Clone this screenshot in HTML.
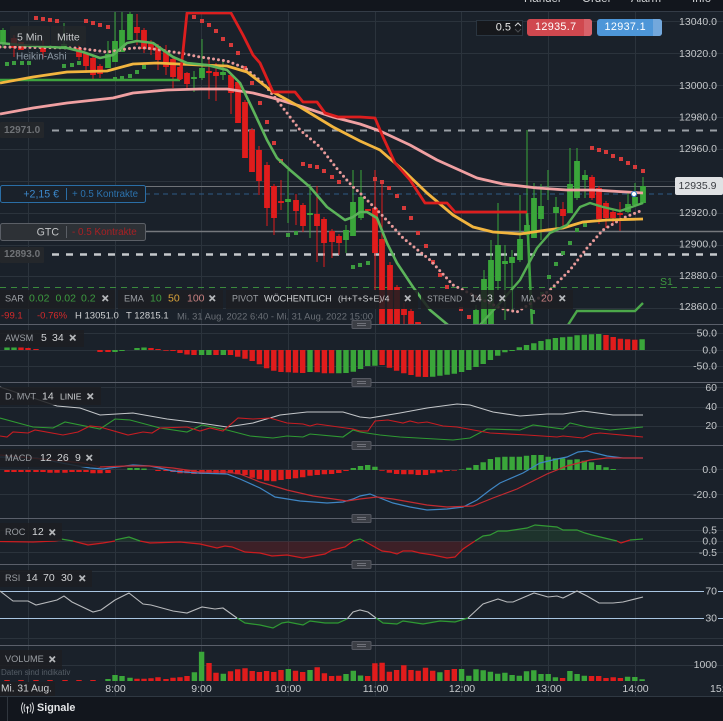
<!DOCTYPE html>
<html lang="de"><head><meta charset="utf-8"><title>Chart</title>
<style>
html,body{margin:0;padding:0;background:#1a212a;width:723px;height:721px;overflow:hidden}
svg{display:block;position:absolute;left:0;top:0;filter:blur(.3px)}
text{font-family:"Liberation Sans",sans-serif;font-size:10.5px;fill:#c8cbce;dominant-baseline:central}
.ax{text-anchor:end;fill:#c4c7ca}
.t{text-anchor:middle;fill:#c8cbce}
.l{fill:#9a9ea3;font-size:9.2px}.w{fill:#d2d4d6}
.x{stroke:#b4b6b9;stroke-width:1.7;fill:none}
.tag{fill:#1d1e22;fill-opacity:.86}
</style></head><body>
<svg width="723" height="721" viewBox="0 0 723 721" xmlns="http://www.w3.org/2000/svg">
<defs><clipPath id="mc"><rect x="0" y="12" width="723" height="312"/></clipPath></defs>
<rect width="723" height="721" fill="#1a212a"/>
<!-- grid -->
<path fill="none" stroke="#2b333c" stroke-width="1" d="M28.5 11V696M115.5 11V696M201.5 11V696M288.5 11V696M375.5 11V696M461.5 11V696M548.5 11V696M635.5 11V696M0 21.5H723M0 53.5H723M0 85.5H723M0 117.5H723M0 149.5H723M0 181.5H723M0 213.5H723M0 245.5H723M0 276.5H723M0 308.5H723M0 333.5H723M0 350.5H723M0 366.5H723M0 387.5H723M0 407.5H723M0 426.5H723M0 469.5H723M0 494.5H723M0 530.5H723M0 541.5H723M0 552.5H723M0 571.5H723M0 638.5H723M0 665.5H723"/>
<!-- top bar -->
<rect width="723" height="11" fill="#12161d"/><rect y="11" width="723" height="1" fill="#343c47"/>
<g style="font-size:11.5px"><text x="524" y="-1" style="font-size:11.5px;fill:#d0d2d4">Handel</text><text x="582" y="-1" style="font-size:11.5px;fill:#d0d2d4">Order</text><text x="631" y="-1" style="font-size:11.5px;fill:#d0d2d4">Alarm</text><text x="692" y="-1" style="font-size:11.5px;fill:#d0d2d4">Info</text></g>
<!-- level lines -->
<path stroke="#9a9fa5" stroke-width="2" stroke-dasharray="7 7" fill="none" d="M52 130.5H723"/>
<path stroke="#c6c9cc" stroke-width="2.4" stroke-dasharray="7 7" fill="none" d="M52 254.5H723"/>
<path stroke="#6f7378" stroke-width="1" fill="none" d="M145 186.5H723"/>
<path stroke="#75787d" stroke-width="1.4" fill="none" d="M145 231.5H723"/>
<path stroke="#2d5a86" stroke-width="1" stroke-dasharray="5 4" fill="none" d="M145 194H723"/>
<path stroke="#3b8a3c" stroke-width="1" stroke-dasharray="6 5" fill="none" d="M0 287.5H723"/>
<text x="660" y="282" style="fill:#3f9a40;font-size:10.5px">S1</text>
<g clip-path="url(#mc)">
<!-- wicks -->
<path fill="none" stroke="#e01c1c" stroke-width="1" d="M14 35V57M43 40V58M79 45V60M86 52V73M93 56V79M100 64V78M137 14V45M144 28V53M151 40V55M158 44V70M166 45V75M173 57V88M180 65V80M187 72V89M209 60V99M216 63V101M231 75V114M238 81V123M245 100V157M252 128V172M259 146V195M267 162V226M274 184V235M281 180V210M296 194V225M303 203V232M317 186V262M324 217V267M332 229V258M339 234V255M375 170V290M382 180V324M390 262V324M397 285V324M404 303V324M411 309V324M599 186V224M606 201V228M613 210V224M620 202V231M592 175V200M563 202V228"/>
<path fill="none" stroke="#3aa63a" stroke-width="1" d="M3 28V48M64 23V47M108 41V68M115 12V62M122 12V52M130 12V40M194 71V92M202 39V80M223 60V80M288 170V223M310 184V238M346 225V253M353 170V236M361 170V220M476 305V324M484 270V324M491 240V324M498 203V290M505 245V320M512 250V310M520 195V262M527 130V236M534 183V238M541 184V240M548 170V200M556 197V228M570 148V213M577 148V200M585 170V198M628 193V213M635 183V206M643 177V204"/>
<!-- bodies -->
<path fill="none" stroke="#e01c1c" stroke-width="5.8" d="M14 38V48M21 42V50M43 46V52M79 48V57M86 53V66M93 58V75M100 66V74M137 27V33M144 30V49M151 42V50M158 46V60M166 52V67M173 59V77M180 67V79M187 73V84M209 71V73M216 72V76M231 75V93M238 82V123M245 102V158M252 130V172M259 150V181M267 165V208M274 186V218M281 201V203M296 200V211M303 205V226M317 214V226M324 219V243M332 231V242M339 236V243M368 209V211M375 208V253M382 239V324M390 265V324M397 287V324M404 309V315M411 311V324M418 322V324M592 177V198M599 188V219M606 203V218M613 212V218M620 213V215M563 209V216"/>
<path fill="none" stroke="#3aa63a" stroke-width="5.8" d="M3 30V43M64 44V47M108 54V68M115 41V62M122 30V52M130 14V40M194 77V79M202 68V78M223 72V75M288 199V202M310 213V215M346 230V240M353 202V236M361 197V218M476 310V324M484 279V324M491 260V324M498 245V281M505 261V264M512 257V263M520 239V260M527 225V235M534 198V238M541 206V219M556 207V213M570 184V213M577 161V198M585 175V180M628 204V212M635 197V205M643 186V203"/>
<!-- SAR red -->
<g fill="#d63a3a"><rect x="34" y="16" width="4" height="4"/><rect x="41" y="17" width="4" height="4"/><rect x="48" y="18" width="4" height="4"/><rect x="55" y="19" width="4" height="4"/><rect x="84" y="19" width="4" height="4"/><rect x="91" y="21" width="4" height="4"/><rect x="98" y="23" width="4" height="4"/><rect x="106" y="25" width="4" height="4"/><rect x="192" y="15" width="4" height="4"/><rect x="200" y="19" width="4" height="4"/><rect x="207" y="23" width="4" height="4"/><rect x="214" y="29" width="4" height="4"/><rect x="221" y="37" width="4" height="4"/><rect x="229" y="43" width="4" height="4"/><rect x="236" y="51" width="4" height="4"/><rect x="243" y="66" width="4" height="4"/><rect x="250" y="81" width="4" height="4"/><rect x="258" y="101" width="4" height="4"/><rect x="265" y="120" width="4" height="4"/><rect x="272" y="141" width="4" height="4"/><rect x="279" y="159" width="4" height="4"/><rect x="301" y="162" width="4" height="4"/><rect x="308" y="164" width="4" height="4"/><rect x="315" y="165" width="4" height="4"/><rect x="322" y="169" width="4" height="4"/><rect x="330" y="175" width="4" height="4"/><rect x="337" y="180" width="4" height="4"/><rect x="373" y="177" width="4" height="4"/><rect x="380" y="180" width="4" height="4"/><rect x="387" y="186" width="4" height="4"/><rect x="395" y="194" width="4" height="4"/><rect x="402" y="206" width="4" height="4"/><rect x="409" y="216" width="4" height="4"/><rect x="416" y="231" width="4" height="4"/><rect x="424" y="244" width="4" height="4"/><rect x="431" y="260" width="4" height="4"/><rect x="438" y="273" width="4" height="4"/><rect x="445" y="285" width="4" height="4"/><rect x="459" y="307" width="4" height="4"/><rect x="467" y="315" width="4" height="4"/><rect x="590" y="146" width="4" height="4"/><rect x="597" y="148" width="4" height="4"/><rect x="604" y="150" width="4" height="4"/><rect x="611" y="154" width="4" height="4"/><rect x="619" y="157" width="4" height="4"/><rect x="626" y="161" width="4" height="4"/><rect x="633" y="165" width="4" height="4"/><rect x="641" y="169" width="4" height="4"/></g>
<!-- SAR green -->
<g fill="#3c9c3f"><rect x="5" y="62" width="4" height="4"/><rect x="12" y="61" width="4" height="4"/><rect x="20" y="61" width="4" height="4"/><rect x="27" y="61" width="4" height="4"/><rect x="62" y="64" width="4" height="4"/><rect x="70" y="63" width="4" height="4"/><rect x="77" y="61" width="4" height="4"/><rect x="113" y="77" width="4" height="4"/><rect x="120" y="76" width="4" height="4"/><rect x="128" y="74" width="4" height="4"/><rect x="135" y="70" width="4" height="4"/><rect x="142" y="65" width="4" height="4"/><rect x="286" y="233" width="4" height="4"/><rect x="294" y="231" width="4" height="4"/><rect x="351" y="265" width="4" height="4"/><rect x="358" y="263" width="4" height="4"/><rect x="366" y="261" width="4" height="4"/><rect x="531" y="310" width="4" height="4"/><rect x="540" y="292" width="4" height="4"/><rect x="547" y="275" width="4" height="4"/><rect x="554" y="262" width="4" height="4"/><rect x="561" y="251" width="4" height="4"/><rect x="568" y="241" width="4" height="4"/><rect x="575" y="228" width="4" height="4"/><rect x="583" y="223" width="4" height="4"/></g>
<!-- green trend -->
<path fill="none" stroke="#3fa33f" stroke-width="2.6" d="M0 80H180M527 213L532 325"/>
<path fill="none" stroke="#4ca84a" stroke-width="2.4" d="M568 325L577 311H635L643 303"/>
<!-- pink dotted -->
<path fill="none" stroke="#e89a9a" stroke-width="3" stroke-linecap="round" stroke-dasharray="0 5" d="M0 47L77 48L107 52L133 48L147 48L180 53L200 57L227 61L245 68L263 83L277 100L300 130L320 147L338 170L353 187L360 193L380 213L403 238L430 260L453 285L477 297L500 308L517 312L533 302L550 290L570 270L587 248L603 230L623 218L643 210"/>
<!-- pink ma -->
<path fill="none" stroke="#f0a0a2" stroke-width="2.8" stroke-linejoin="round" d="M0 114L33 108L67 103L113 98L133 93L167 90L200 89L227 89L253 93L273 98L300 106L333 117L360 124L380 131L410 145L437 160L457 169L477 178L503 184L537 188L567 190L593 190L643 193"/>
<!-- yellow -->
<path fill="none" stroke="#f2b53f" stroke-width="2.8" stroke-linejoin="round" d="M0 83L33 77L67 72L107 71L133 64L157 63L200 65L227 66L247 72L273 92L300 107L333 127L360 141L380 150L403 170L427 193L453 215L473 227L493 232L520 234L547 230L563 228L583 222L607 220L643 219"/>
<!-- supertrend red -->
<path fill="none" stroke="#dc1e1e" stroke-width="2.8" stroke-linejoin="round" d="M180 80L187 13H231L243 35L253 55L260 63L273 92H295L303 102H317L325 113L338 117H360L375 118L383 137L395 163L403 172L410 180L425 203H447L455 212H527"/>
<!-- green sma -->
<path fill="none" stroke="#5cb35a" stroke-width="2.6" stroke-linejoin="round" d="M0 43L20 45L67 48L83 52L100 58L113 55L127 43L137 41L153 43L173 57L187 63L207 65L227 70L240 83L253 110L267 140L277 158L290 170L310 187L327 207L345 220L353 217L360 212L367 212L377 218L387 243L397 263L413 287L430 310L448 325"/>
<path fill="none" stroke="#55ad53" stroke-width="2.4" stroke-linejoin="round" d="M480 325L500 303L520 280L537 248L550 233L567 225L580 207L590 203L603 207L620 211L643 203"/>
<circle cx="634" cy="194" r="2.6" fill="#fff" stroke="#3b7fc0" stroke-width="1"/>
</g>
<!-- separators -->
<path fill="none" stroke="#5a5f6a" stroke-width="1" d="M0 324.5H723M0 382.5H723M0 445.5H723M0 518.5H723M0 564.5H723M0 645.5H723"/>
<!-- AWSM -->
<path fill="none" stroke="#e01c1c" stroke-width="5.4" d="M21 347.5V350M28 348V350M36 349V350M100 350V352M108 350V352M151 348V350M158 349V350M166 350V350.8M173 350V351M180 350V353M187 350V354.5M194 350V355M216 350V355M230.5 350V355M237.7 350V356.7M245 350V358.7M252.2 350V361M259.4 350V364.3M266.6 350V368.3M273.8 350V370.7M281 350V372M288.3 350V372.3M295.5 350V372.7M302.7 350V373M317.2 350V372.3M324.4 350V373.3M331.6 350V373.3M382.1 350V365M389.4 350V367.7M396.6 350V370.7M403.8 350V373.3M411 350V375M418.2 350V376.7M425.5 350V377M606 350V335M613.2 350V337M620.4 350V338.7M627.6 350V339.3M634.8 350V339.7"/>
<path fill="none" stroke="#3aa63a" stroke-width="5.4" d="M7 347.5V350M14 347.5V350M115 350V352M122 350V351M137 348V350M144 347.5V350M201.6 350V355M208.9 350V355M223.3 350V355M310 350V372M338.8 350V373.3M346 350V373M353.3 350V371.7M360.5 350V369M367.7 350V366M374.9 350V365.7M432.7 350V376.7M439.9 350V375.7M447.1 350V374.7M454.3 350V373.7M461.6 350V372M468.8 350V370M476 350V367M483.2 350V364M490.4 350V360M497.7 350V355.7M504.9 350V352.3M512.1 350V351M519.3 350V347.3M526.5 350V345M533.8 350V343.3M541 350V341M548.2 350V339.3M555.4 350V338M562.6 350V337.3M569.9 350V336.7M577.1 350V335.3M584.3 350V334.7M591.5 350V334.3M598.7 350V334M642.1 350V339.3"/>
<!-- DMVT -->
<path fill="none" stroke="#c4c7ca" stroke-width="1.1" d="M0 387L57 406L80 408L100 415L133 413L167 419L200 423L227 427L253 423L280 415L307 412L343 412L360 417L370 418L400 413L427 408L457 404L470 405L493 412L520 416L547 414L563 414L583 411L613 415L643 415"/>
<path fill="none" stroke="#2f9a33" stroke-width="1.1" d="M0 418L33 427L53 428L65 422L100 429L115 419L130 420L160 428L187 432L202 425L227 430L250 436L273 438L287 436L303 437L310 434L343 437L353 430L360 432L380 435L400 437L453 440L470 438L487 429L520 430L533 425L563 429L570 423L587 427L610 430L643 427"/>
<path fill="none" stroke="#c81d22" stroke-width="1.1" d="M0 436L7 437L13 432L28 433L35 430L63 435L78 432L90 426L100 427L128 435L143 432L152 433L160 428L187 427L200 431L210 428L223 431L238 418L253 419L270 418L287 423L303 424L310 426L317 424L353 429L360 431L368 431L375 421L388 420L403 423L410 421L418 423L427 422L443 426L457 427L490 433L527 435L557 437L563 436L583 438L592 434L600 433L643 437"/>
<!-- MACD -->
<path fill="none" stroke="#e01c1c" stroke-width="5.4" d="M7 470V472M14 470V472M21 470V472M28 470V472M36 470V472M43 470V472M50 470V472.7M57 470V472.7M65 470V472.7M72 470V472M79 470V472M86 470V472M93 470V473.3M100 470V473.3M108 470V473M158 470V471M166 470V471M173 470V472M180 470V473.3M187 470V473.3M194 470V474M202 470V474M209 470V474M216 470V474M223 470V474M230.5 470V473.3M237.7 470V474.3M245 470V475M252.2 470V477.7M259.4 470V479.3M266.6 470V480.7M273.8 470V481.3M281 470V480M288.3 470V479M295.5 470V478.3M302.7 470V477.3M310 470V475.7M317.2 470V475M324.4 470V474.3M331.6 470V474M338.8 470V473M346 470V471M382 470V470.8M389.4 470V472.7M396.6 470V474M403.8 470V474.3M411 470V474.3M418.2 470V475M425.5 470V475M432.7 470V473.3M439.9 470V472.3M447.1 470V471M454.3 470V470.6"/>
<path fill="none" stroke="#3aa63a" stroke-width="5.4" d="M130 470V468M137 470V468M144 470V468.5M353.3 470V468M360.5 470V466M367.7 470V465M374.9 470V466.7M461.6 470V469.5M468.8 470V467.7M476 470V465M483.2 470V462.3M490.4 470V459M497.7 470V457.3M504.9 470V456.7M512.1 470V456.7M519.3 470V456.7M526.5 470V455.7M533.8 470V455M541 470V455M548.2 470V456.7M555.4 470V458.3M562.6 470V458.3M569.9 470V459.7M577.1 470V459.3M584.3 470V460.7M591.5 470V462.3M598.7 470V465M606 470V467.3M613.2 470V469"/>
<path fill="none" stroke="#3f86c4" stroke-width="1.2" d="M0 457L37 458L67 464L90 468L103 469L117 467L133 465L150 466L173 471L197 473L227 474L240 479L260 488L275 497L300 501L327 503L343 502L353 499L360 496L370 494L380 498L393 503L410 507L427 510L447 509L463 507L477 500L490 490L500 483L523 473L540 463L557 459L567 457L578 452L587 451L607 456L623 458L643 458"/>
<path fill="none" stroke="#c22a30" stroke-width="1.2" d="M0 455L83 463L100 467L127 466L150 466L173 468L200 472L227 472L240 474L260 482L287 490L313 496L347 501L360 499L377 497L393 499L427 505L447 507L473 506L493 498L517 489L547 474L567 466L590 460L607 458L643 458"/>
<!-- ROC -->
<path fill="#e01c1c" fill-opacity=".18" d="M73 541.5L88 545L103 543L115 541.5ZM140 541.5L150 543L180 542L200 544L217 548L225 546L232 547L245 552L260 553L272 556L287 555L303 558L325 554L332 550L345 547L353 541.5ZM364 541.5L382 551L390 552L397 554L403 551L412 551L420 553L433 555L447 558L455 557L463 549L475 541.5Z"/>
<path fill="#3aa63a" fill-opacity=".14" d="M115 541.5L129 537L140 541.5ZM475 541.5L483 536L490 535L498 531L507 531L527 528L535 525L557 527L563 530L577 530L585 533L592 535L617 541.5Z"/>
<path fill="none" stroke="#cc1d20" stroke-width="1.2" d="M0 541.5L33 542L55 541L61 540M73 541L88 545L103 543L115 541M140 541L150 543L180 542L200 544L217 548L225 546L232 547L245 552L260 553L272 556L287 555L303 558L325 554L332 550L345 547L353 541M364 541L382 551L390 552L397 554L403 551L412 551L420 553L433 555L447 558L455 557L463 549L475 541M617 541L621 543L630 540"/>
<path fill="none" stroke="#339a35" stroke-width="1.2" d="M61 539L73 541M115 540L129 537L140 541M353 541L360 539L364 541M475 541L483 536L490 535L498 531L507 531L527 528L535 525L557 527L563 530L577 530L585 533L592 535L617 541M630 540L643 539"/>
<!-- RSI -->
<path fill="#3aa63a" fill-opacity=".14" d="M237 618.5L245 623L260 625L273 628L282 623L288 622L303 625L310 621L325 623L338 623L347 618.5ZM376 618.5L383 623L397 624L403 621L423 624L440 621L455 622L468 618.5Z"/>
<path fill="none" stroke="#a9c5e2" stroke-width="1.1" d="M0 591.5H723M0 618.5H723"/>
<path fill="none" stroke="#b8babd" stroke-width="1.1" d="M0 591L13 601L28 601L36 605L57 600L64 596L72 602L93 612L101 610L115 600L129 593L143 604L151 605L173 611L187 613L202 607L215 609L223 608L237 618M347 619L353 612L360 610L368 612L376 618M468 618L483 604L498 599L507 602L513 602L534 593L548 597L557 596L563 598L577 591L587 596L599 603L613 603L623 602L643 597"/>
<path fill="none" stroke="#2f9a33" stroke-width="1.2" d="M237 618L245 623L260 625L273 628L282 623L288 622L303 625L310 621L325 623L338 623L347 619M376 618L383 623L397 624L403 621L423 624L440 621L455 622L468 618"/>
<!-- Volume -->
<path fill="none" stroke="#e01c1c" stroke-width="5.4" d="M7 680V681M21 680V681M36 680V681M50 680V681M65 680V681M79 680V681M93 680V681M137 681V678.7M144 681V678.7M151 681V678.3M158 681V677.3M166 681V679M173 681V677.7M180 681V677.3M187 681V676M209 681V663M216 681V672.7M230.5 681V671.3M237.7 681V669.3M245 681V668.3M252.2 681V671M259.4 681V672M266.6 681V671M273.8 681V672M281 681V670M295.5 681V670.7M302.7 681V672M317.2 681V667.3M324.4 681V673.3M331.6 681V676M338.8 681V675.7M367.7 681V676M374.9 681V663.3M382.1 681V662.7M389.4 681V671.7M396.6 681V670M403.8 681V665.3M411 681V670M418.2 681V670.7M425.5 681V667.7M432.7 681V670.7M447.1 681V670M454.3 681V669M562.6 681V678M591.5 681V676M598.7 681V676M606 681V678M613.2 681V677.3M620.4 681V678"/>
<path fill="none" stroke="#3aa63a" stroke-width="5.4" d="M108 681V679M115 681V675M122 681V676M130 681V677.7M194.4 681V672.3M201.6 681V651.7M223.3 681V673.7M288.3 681V669M310 681V670M346 681V674M353.3 681V670.7M360.5 681V675.5M439.9 681V672.3M461.6 681V669M468.8 681V675.7M476 681V669.3M483.2 681V670.3M490.4 681V671.7M497.7 681V673.7M504.9 681V672.7M512.1 681V675M519.3 681V675.7M526.5 681V671.3M533.8 681V670.3M541 681V674M548.2 681V674M555.4 681V677.3M569.9 681V671M577.1 681V674M584.3 681V675.7M627.6 681V676.7M634.8 681V677M642.1 681V679.3"/>
<!-- handles -->
<g fill="#3c3f46" stroke="#565962" stroke-width="1">
<rect x="352" y="320.5" width="19" height="8" rx="1"/><rect x="352" y="378.5" width="19" height="8" rx="1"/><rect x="352" y="441.5" width="19" height="8" rx="1"/><rect x="352" y="514.5" width="19" height="8" rx="1"/><rect x="352" y="560.5" width="19" height="8" rx="1"/><rect x="352" y="641.5" width="19" height="8" rx="1"/></g>
<path fill="none" stroke="#80838a" stroke-width=".8" d="M357 323.5H366M357 325.5H366M357 381.5H366M357 383.5H366M357 444.5H366M357 446.5H366M357 517.5H366M357 519.5H366M357 563.5H366M357 565.5H366M357 644.5H366M357 646.5H366"/>
<!-- Legend top-left -->
<rect x="10" y="26" width="40" height="20" rx="1" fill="#25272b" fill-opacity=".82"/>
<rect x="51" y="26" width="35" height="20" rx="1" fill="#25272b" fill-opacity=".82"/>
<text x="17" y="37.5" style="fill:#c8cacc">5 Min</text><text x="57" y="37.5" style="fill:#c8cacc">Mitte</text>
<text x="16" y="57" style="fill:#8e9aa6;font-size:10px">Heikin-Ashi</text>
<!-- level labels -->
<rect x="0" y="122" width="44" height="16" rx="1" fill="#24272b"/><text x="4" y="130.5" style="fill:#6f7276;font-size:10px;font-weight:700">12971.0</text>
<rect x="0" y="247" width="44" height="16" rx="1" fill="#24272b"/><text x="4" y="254.5" style="fill:#6f7276;font-size:10px;font-weight:700">12893.0</text>
<!-- position boxes -->
<rect x="0.5" y="185.5" width="145" height="17" rx="2" fill="#1a212a" stroke="#2a6ea6" stroke-width="1"/>
<text x="59" y="194.5" style="text-anchor:end;fill:#3c88cb;font-size:10.6px">+2,15 €</text>
<path stroke="#2a6ea6" d="M66.5 188V200"/>
<text x="72" y="194.5" style="fill:#2c72ad;font-size:9.7px">+ 0.5 Kontrakte</text>
<rect x="0.5" y="223.5" width="145" height="17" rx="2" fill="#2d3136" stroke="#5b5f66" stroke-width="1"/>
<text x="59" y="232.5" style="text-anchor:end;fill:#c2c4c6;font-size:10.6px">GTC</text>
<path stroke="#5b5f66" d="M66.5 226V238"/>
<text x="72" y="232.5" style="fill:#a82024;font-size:9.9px">- 0.5 Kontrakte</text>
<!-- trade buttons -->
<rect x="476.5" y="20.5" width="46" height="15" fill="#16181c" stroke="#2a3540"/>
<text x="511" y="27.5" style="text-anchor:end;fill:#e8e8e8;font-size:11px">0.5</text>
<path fill="none" stroke="#d0d2d4" stroke-width="1" d="M515 26L518 23L521 26"/><path fill="none" stroke="#4a4d52" stroke-width="1" d="M515 29L518 32L521 29"/>
<rect x="527" y="19" width="65" height="17" rx="3" fill="#d0484f"/>
<path fill="#d8626a" d="M584 19H589A3 3 0 0 1 592 22V33A3 3 0 0 1 589 36H584Z"/>
<text x="535" y="27" style="fill:#fff;font-size:10.8px;letter-spacing:.35px">12935.7</text>
<rect x="597" y="19" width="65" height="17" rx="3" fill="#4d96d8"/>
<path fill="#73a8dc" d="M653 19H659A3 3 0 0 1 662 22V33A3 3 0 0 1 659 36H653Z"/>
<text x="604.5" y="27" style="fill:#fff;font-size:10.8px;letter-spacing:.35px">12937.1</text>
<!-- axis labels -->
<text class="ax" x="717" y="22">13040.0</text><text class="ax" x="717" y="54">13020.0</text><text class="ax" x="717" y="86">13000.0</text><text class="ax" x="717" y="117.5">12980.0</text><text class="ax" x="717" y="149">12960.0</text><text class="ax" x="717" y="213">12920.0</text><text class="ax" x="717" y="244.5">12900.0</text><text class="ax" x="717" y="276">12880.0</text><text class="ax" x="717" y="307">12860.0</text>
<rect x="675" y="177" width="48" height="18" rx="2" fill="#e0e2e4"/><text x="716.5" y="186" class="ax" style="fill:#3a3d42">12935.9</text>
<text class="ax" x="717" y="333.5">50.0</text><text class="ax" x="717" y="350.5">0.0</text><text class="ax" x="717" y="366.5">-50.0</text>
<text class="ax" x="717" y="388">60</text><text class="ax" x="717" y="407">40</text><text class="ax" x="717" y="426">20</text>
<text class="ax" x="717" y="470">0.0</text><text class="ax" x="717" y="495">-20.0</text>
<text class="ax" x="717" y="530.5">0.5</text><text class="ax" x="717" y="541.5">0.0</text><text class="ax" x="717" y="553">-0.5</text>
<rect x="704" y="586" width="14" height="11" fill="#1a212a"/><text class="ax" x="717" y="591.5">70</text>
<rect x="704" y="613" width="14" height="11" fill="#1a212a"/><text class="ax" x="717" y="618.5">30</text>
<text class="ax" x="717" y="665">1000</text>
<!-- indicator tags main -->
<rect class="tag" x="0" y="290" width="115" height="19"/><rect class="tag" x="118" y="290" width="105" height="19"/><rect class="tag" x="226" y="290" width="192" height="19"/><rect class="tag" x="421" y="290" width="91" height="19"/><rect class="tag" x="515" y="290" width="58" height="19"/>
<text class="l" x="5" y="298.5">SAR</text><text x="29" y="298.5" style="fill:#3d9b40">0.02</text><text x="55.5" y="298.5" style="fill:#3d9b40">0.02</text><text x="81" y="298.5" style="fill:#3d9b40">0.2</text>
<path class="x" d="M102.5 295.5L108 301M108 295.5L102.5 301"/>
<text class="l" x="124" y="298.5">EMA</text><text x="150" y="298.5" style="fill:#3d9b40">10</text><text x="168" y="298.5" style="fill:#d9a23a">50</text><text x="187" y="298.5" style="fill:#c78080">100</text>
<path class="x" d="M209.5 295.5L215 301M215 295.5L209.5 301"/>
<text class="l" x="232" y="298.5" style="font-size:8.8px">PIVOT</text><text class="w" x="264" y="298.5" style="font-size:9.1px">WÖCHENTLICH</text><text class="w" x="338" y="298.5" style="font-size:8.7px">(H+T+S+E)/4</text>
<path class="x" d="M405 295.5L410.5 301M410.5 295.5L405 301"/>
<text class="l" x="427" y="298.5" style="font-size:8.6px">STREND</text><text class="w" x="470" y="298.5">14</text><text class="w" x="487" y="298.5">3</text>
<path class="x" d="M499.5 295.5L505 301M505 295.5L499.5 301"/>
<text class="l" x="521" y="298.5">MA</text><text x="541" y="298.5" style="fill:#c78080">20</text>
<path class="x" d="M559.5 295.5L565 301M565 295.5L559.5 301"/>
<!-- info row -->
<text x="1" y="316" style="fill:#d42a2a;font-size:9.5px">-99.1</text><text x="37" y="316" style="fill:#d42a2a;font-size:9.5px">-0.76%</text>
<text x="75" y="316" style="fill:#cfd1d3;font-size:9.5px">H 13051.0</text><text x="126" y="316" style="fill:#cfd1d3;font-size:9.5px">T 12815.1</text>
<text x="177" y="316" style="fill:#6b7077;font-size:9.4px">Mi. 31 Aug. 2022 6:40 - Mi. 31 Aug. 2022 15:00</text>
<!-- sub tags -->
<rect class="tag" x="0" y="330" width="84" height="17"/>
<text class="l" x="5" y="338">AWSM</text><text class="w" x="41" y="338">5</text><text class="w" x="52" y="338">34</text><path class="x" d="M70 335L75.5 340.5M75.5 335L70 340.5"/>
<rect class="tag" x="0" y="387" width="101" height="18"/>
<text class="l" x="5" y="396.5">D. MVT</text><text class="w" x="42" y="396.5">14</text><text class="w" x="60" y="396.5" style="font-size:8.6px">LINIE</text><path class="x" d="M87.5 393.5L93 399M93 393.5L87.5 399"/>
<rect class="tag" x="0" y="449" width="100" height="18"/>
<text class="l" x="5" y="458">MACD</text><text class="w" x="40" y="458">12</text><text class="w" x="57" y="458">26</text><text class="w" x="75" y="458">9</text><path class="x" d="M86.5 455L92 460.5M92 455L86.5 460.5"/>
<rect class="tag" x="0" y="523" width="62" height="18"/>
<text class="l" x="5" y="532">ROC</text><text class="w" x="32" y="532">12</text><path class="x" d="M49.5 529.5L55 535M55 529.5L49.5 535"/>
<rect class="tag" x="0" y="570" width="92" height="17"/>
<text class="l" x="5" y="578">RSI</text><text class="w" x="26" y="578">14</text><text class="w" x="43" y="578">70</text><text class="w" x="61" y="578">30</text><path class="x" d="M79.5 575.5L85 581M85 575.5L79.5 581"/>
<rect class="tag" x="0" y="650" width="62" height="19"/>
<text class="l" x="5" y="659">VOLUME</text><path class="x" d="M49.5 656.5L55 662M55 656.5L49.5 662"/>
<text x="1" y="672.5" style="fill:#555d66;font-size:8px">Daten sind indikativ</text>
<!-- time axis -->
<rect x="0" y="682" width="55" height="14" fill="#1d1e22"/>
<text x="1" y="689" style="fill:#d2d4d6;font-size:10.2px">Mi. 31 Aug.</text>
<text class="t" x="115.5" y="689">8:00</text><text class="t" x="201.5" y="689">9:00</text><text class="t" x="288" y="689">10:00</text><text class="t" x="375.5" y="689">11:00</text><text class="t" x="462" y="689">12:00</text><text class="t" x="548.5" y="689">13:00</text><text class="t" x="635.5" y="689">14:00</text><text x="710" y="689">15:00</text>
<!-- bottom bar -->
<rect y="696" width="723" height="25" fill="#12161d"/><rect y="696" width="723" height="1" fill="#2f3842"/>
<rect x="7" y="697" width="1" height="24" fill="#30363e"/>
<g fill="none" stroke="#dfe1e3" stroke-width="1"><path d="M25 704Q23 708 25 712M30 704Q32 708 30 712M23 702.5Q20 708 23 713.5M32 702.5Q35 708 32 713.5" stroke-width=".9"/><path d="M27.5 708V713.5"/></g><circle cx="27.5" cy="707.5" r="1.3" fill="#dfe1e3"/>
<text x="37" y="708" style="fill:#e4e6e8;font-size:10.8px;font-weight:700">Signale</text>
</svg>
</body></html>
